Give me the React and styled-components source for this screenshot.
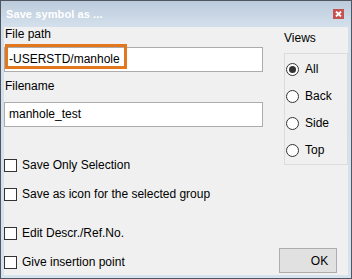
import styled, { createGlobalStyle } from "styled-components";

const Global = createGlobalStyle`
  body {
    margin: 0;
    background: #ffffff;
  }
`;

const Window = styled.div`
  width: 352px;
  height: 279px;
  box-sizing: border-box;
  border: 1px solid #4f5661;
  background: linear-gradient(#bccbdc 0, #d3dfeb 25px, #d6e2ee 100%);
  display: flex;
  flex-direction: column;
  padding: 0 3px 3px 3px;
  font-family: "Liberation Sans", Arial, sans-serif;
  font-size: 12px;
  color: #000;
`;

const TitleBar = styled.div`
  height: 25px;
  flex: none;
  display: flex;
  align-items: center;
  justify-content: space-between;
  padding: 0 2px 1px 2px;
`;

const Title = styled.span`
  color: #ffffff;
  font-weight: bold;
  font-size: 11px;
  letter-spacing: 0.1px;
`;

const Close = styled.div`
  width: 11px;
  height: 10px;
  background: #c75050;
  margin-right: 2px;
  margin-top: 1px;
  display: flex;
  align-items: center;
  justify-content: center;
`;

const Body = styled.div`
  flex: 1;
  background: #f0f0f0;
  display: flex;
  gap: 16px;
`;

const LeftCol = styled.div`
  width: 259px;
  display: flex;
  flex-direction: column;
`;

const Label = styled.div`
  line-height: 14px;
  height: 14px;
  padding-left: 1px;
  margin-top: ${(p) => p.$mt || 0}px;
`;

const FieldWrap = styled.div`
  position: relative;
  margin-top: ${(p) => p.$mt || 0}px;
`;

const Field = styled.div`
  height: 25px;
  box-sizing: border-box;
  border: 1px solid #acacac;
  background: #ffffff;
  padding: 0 4px 1px 4px;
  display: flex;
  align-items: center;
`;

const Highlight = styled.div`
  position: absolute;
  left: 1px;
  top: -3px;
  width: 122px;
  height: 25px;
  box-sizing: border-box;
  border: 3px solid #e3771d;
  pointer-events: none;
`;

const CheckRow = styled.div`
  display: flex;
  align-items: center;
  gap: 5px;
  height: 14px;
  margin-top: ${(p) => p.$mt || 0}px;
`;

const Box = styled.span`
  width: 13px;
  height: 13px;
  box-sizing: border-box;
  border: 1px solid #333333;
  background: #ffffff;
  flex: none;
`;

const RightCol = styled.div`
  flex: 1;
  display: flex;
  flex-direction: column;
  justify-content: space-between;
`;

const Views = styled.div`
  padding-left: 5px;
  display: flex;
  flex-direction: column;
`;

const ViewsLabel = styled.div`
  line-height: 14px;
  margin-top: 4px;
`;

const Group = styled.div`
  margin-top: 8px;
  height: 112px;
  box-sizing: border-box;
  border: 1px solid #dcdcdc;
  display: flex;
  flex-direction: column;
  gap: 13px;
  padding: 8px 0 0 1px;
`;

const RadioRow = styled.div`
  display: flex;
  align-items: center;
  gap: 6px;
  height: 14px;
`;

const Radio = styled.span`
  width: 13px;
  height: 13px;
  box-sizing: border-box;
  border-radius: 50%;
  border: 1px solid #333333;
  background: #ffffff;
  display: flex;
  align-items: center;
  justify-content: center;
  flex: none;

  &::after {
    content: "";
    width: 7px;
    height: 7px;
    border-radius: 50%;
    background: ${(p) => (p.$checked ? "#333333" : "transparent")};
  }
`;

const OkButton = styled.div`
  width: 58px;
  height: 25px;
  box-sizing: border-box;
  border: 1px solid #adadad;
  background: #e1e1e1;
  margin-bottom: 2px;
  padding-left: 23px;
  display: flex;
  align-items: center;
  justify-content: center;
`;

const views = ["All", "Back", "Side", "Top"];

const checks = [
  { text: "Save Only Selection", mt: 31 },
  { text: "Save as icon for the selected group", mt: 15 },
  { text: "Edit Descr./Ref.No.", mt: 25 },
  { text: "Give insertion point", mt: 15 },
];

export default function App() {
  return (
    <>
      <Global />
      <Window>
        <TitleBar>
          <Title>Save symbol as ...</Title>
          <Close>
            <svg width="7" height="6" viewBox="0 0 7 6">
              <path d="M1 0.5 L6 5.5 M6 0.5 L1 5.5" stroke="#ffffff" strokeWidth="1.8" />
            </svg>
          </Close>
        </TitleBar>
        <Body>
          <LeftCol>
            <Label>File path</Label>
            <FieldWrap $mt={6}>
              <Field>-USERSTD/manhole</Field>
              <Highlight />
            </FieldWrap>
            <Label $mt={7}>Filename</Label>
            <FieldWrap $mt={9}>
              <Field>manhole_test</Field>
            </FieldWrap>
            {checks.map((c) => (
              <CheckRow key={c.text} $mt={c.mt}>
                <Box />
                <span>{c.text}</span>
              </CheckRow>
            ))}
          </LeftCol>
          <RightCol>
            <Views>
              <ViewsLabel>Views</ViewsLabel>
              <Group>
                {views.map((v, i) => (
                  <RadioRow key={v}>
                    <Radio $checked={i === 0} />
                    <span>{v}</span>
                  </RadioRow>
                ))}
              </Group>
            </Views>
            <OkButton>OK</OkButton>
          </RightCol>
        </Body>
      </Window>
    </>
  );
}
